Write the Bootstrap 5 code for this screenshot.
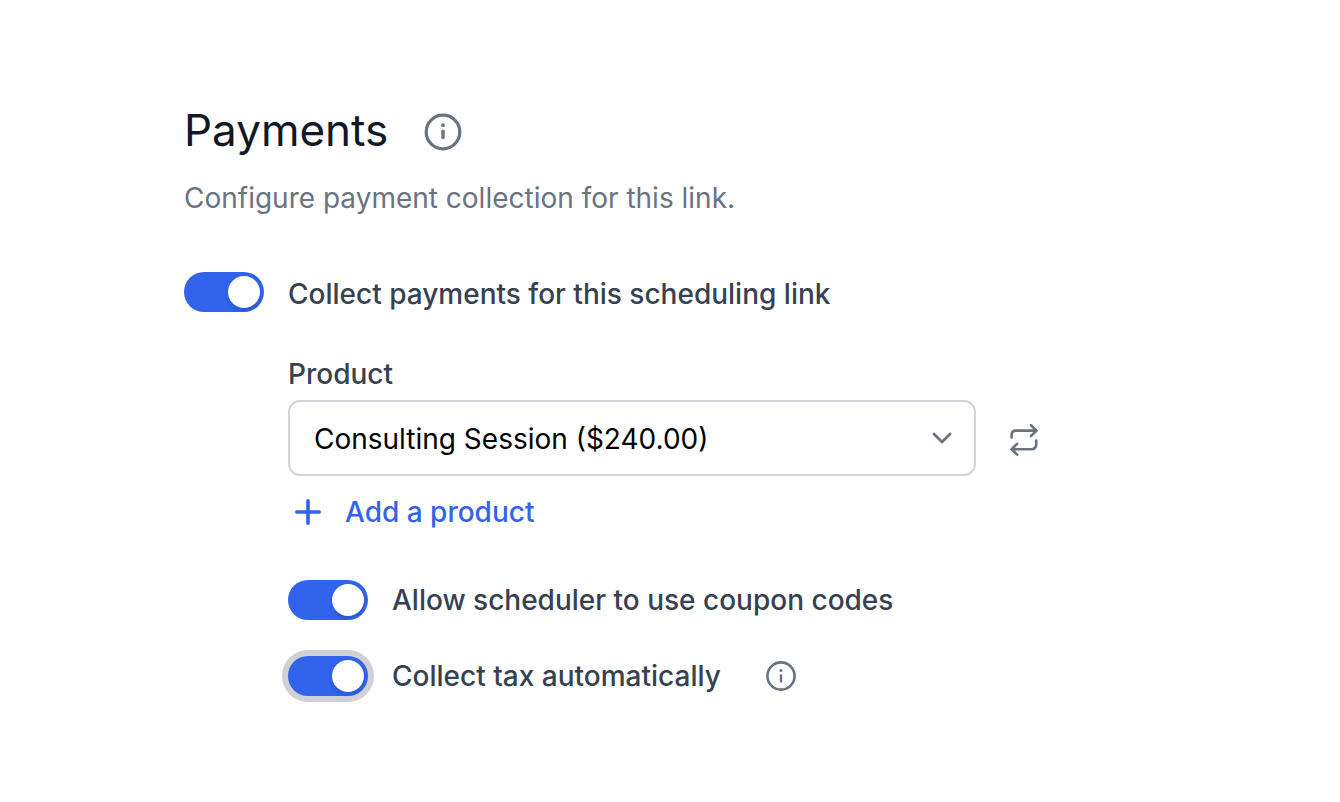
<!DOCTYPE html>
<html lang="en">
<head>
<meta charset="utf-8">
<meta name="viewport" content="width=device-width, initial-scale=1">
<title>Payments</title>
<link href="https://cdn.jsdelivr.net/npm/bootstrap@5.3.0/dist/css/bootstrap.min.css" rel="stylesheet">
<style>
  body { font-family: Inter, "Liberation Sans", sans-serif; font-size: 28px; line-height: 40px; color: #374151; background: #fff; }
  .payments { padding: 102px 284px 104px 184px; }
  .payments-title { font-size: 44px; line-height: 56px; font-weight: 400; color: #111827; }
  .muted-text { color: #6b7280; }
  .icon-btn { padding: 0; border: 0; background: none; color: #6b7280; display: flex; flex: none; align-items: center; justify-content: center; }
  .switch-row { display: flex; align-items: center; gap: 24px; min-height: 40px; padding: 0; margin: 0; }
  .form-switch.switch-row .form-check-input {
    flex: none; float: none; width: 80px; height: 40px; margin: 0; border: 0; border-radius: 20px;
    background: #3164ea; box-shadow: none; position: relative;
  }
  .form-switch.switch-row .form-check-input::after {
    content: ""; position: absolute; top: 4px; right: 4px; width: 32px; height: 32px; border-radius: 50%;
    background: #fff; box-shadow: 0 2px 4px rgba(0, 0, 0, .15);
  }
  .form-switch.switch-row .form-check-input:not(:checked) { background: #d1d5db; }
  .form-switch.switch-row .form-check-input:not(:checked)::after { right: 44px; }
  .form-switch.switch-row .form-check-input.ringed { box-shadow: 0 0 0 6px #cfd1d7; }
  .medium-text { font-weight: 500; }
  .nested { padding-left: 104px; }
  .product-label { margin: 40px 0 6px; }
  .tax-row { margin-top: 36px; }
  .product-select {
    height: 76px; padding: 2px 60px 0 24px; border: 2px solid #d1d5db; border-radius: 12px; font-size: 28px; line-height: 40px; color: #000;
    background-image: url("data:image/svg+xml,%3Csvg xmlns='http://www.w3.org/2000/svg' viewBox='0 0 24 16' fill='none' stroke='%236b7280' stroke-width='2.8' stroke-linecap='round' stroke-linejoin='round'%3E%3Cpath d='M4 4l8 8 8-8'/%3E%3C/svg%3E");
    background-size: 24px 16px; background-position: right 20px center;
  }
  .refresh-btn { width: 64px; height: 76px; }
  .add-link { color: #3164ea; text-decoration: none; gap: 23px; padding-left: 6px; }
</style>
</head>
<body>
<main class="payments">
  <header>
    <div class="d-flex align-items-center">
      <h1 class="payments-title mb-0">Payments</h1>
      <button type="button" class="icon-btn ms-4 px-2" aria-label="About payments">
        <svg width="48" height="48" viewBox="0 0 48 48" fill="none" stroke="currentColor" stroke-linecap="round">
          <circle cx="23" cy="26" r="16.800" stroke-width="3.200"/>
          <path d="M23 25.200v6.400" stroke-width="3.400"/><circle cx="23" cy="19.2" r="1.900" fill="currentColor" stroke="none"/>
        </svg>
      </button>
    </div>
    <p class="muted-text mb-0 mt-3 pt-1">Configure payment collection for this link.</p>
  </header>

  <form class="mt-5 pt-1">
    <div class="form-check form-switch switch-row">
      <input class="form-check-input" type="checkbox" role="switch" id="collect" checked>
      <label class="medium-text pt-1" for="collect">Collect payments for this scheduling link</label>
    </div>

    <div class="nested">
      <label class="medium-text d-block product-label" for="product">Product</label>
      <div class="d-flex gap-3">
        <select class="form-select product-select" id="product">
          <option>Consulting Session ($240.00)</option>
        </select>
        <button type="button" class="icon-btn refresh-btn" aria-label="Refresh products">
          <svg width="36" height="40" viewBox="0 0 36 40" fill="none" stroke="currentColor" stroke-width="2.6" stroke-linecap="round" stroke-linejoin="round">
            <path d="M5.6 19.600v-2.600q0-4.400 4.400-4.400H30.400M25 7.200l5.600 5.400-5.600 5.400"/>
            <path d="M30.200 22.600v3.600q0 5-5 5H5.600M11.200 25.800l-5.600 5.400 5.600 5.400"/>
          </svg>
        </button>
      </div>
      <div class="d-flex mt-3">
        <a href="#" class="add-link medium-text d-flex align-items-center">
          <svg width="28" height="28" viewBox="0 0 28 28" fill="none" stroke="currentColor" stroke-width="3.6" stroke-linecap="round" aria-hidden="true"><path d="M14 2.800v22.400M2.800 14h22.400"/></svg>
          Add a product
        </a>
      </div>
      <div class="form-check form-switch switch-row mt-5">
        <input class="form-check-input" type="checkbox" role="switch" id="coupons" checked>
        <label class="medium-text" for="coupons">Allow scheduler to use coupon codes</label>
      </div>
      <div class="form-check form-switch switch-row tax-row">
        <input class="form-check-input ringed" type="checkbox" role="switch" id="tax" checked>
        <label class="medium-text" for="tax">Collect tax automatically</label>
        <button type="button" class="icon-btn ms-1 px-2" aria-label="About automatic tax">
          <svg width="48" height="40" viewBox="0 0 48 40" fill="none" stroke="currentColor" stroke-linecap="round">
            <circle cx="24" cy="20" r="13.600" stroke-width="2.600"/>
            <path d="M24 19.400v6" stroke-width="2.400"/><circle cx="24" cy="14.600" r="1.500" fill="currentColor" stroke="none"/>
          </svg>
        </button>
      </div>
    </div>
  </form>
</main>
<script src="https://cdn.jsdelivr.net/npm/bootstrap@5.3.0/dist/js/bootstrap.bundle.min.js"></script>
</body>
</html>
